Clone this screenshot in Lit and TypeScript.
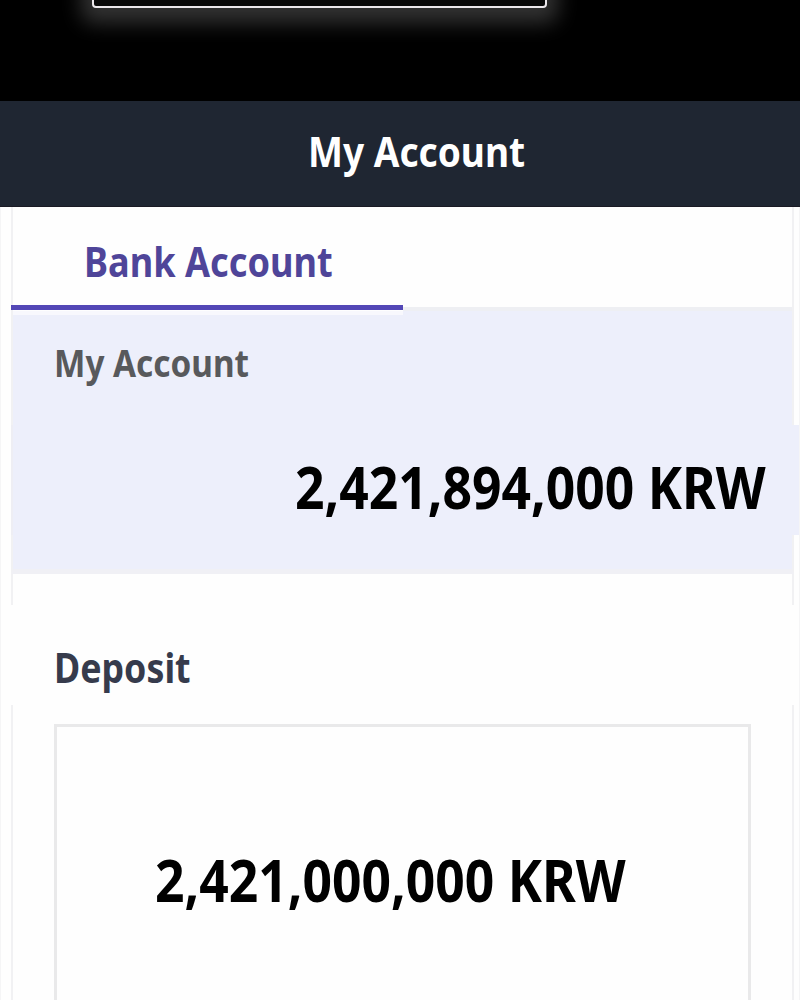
import { LitElement, TemplateResult, css, html } from 'lit';
import { customElement, property } from 'lit/decorators.js';

@customElement('app-root')
export class AccountPageElement extends LitElement {
  @property()
  balance = '2,421,894,000';

  @property()
  deposit = '2,421,000,000';

  @property()
  currency = 'KRW';

  static override styles = css`
    :host {
      display: flex;
      flex-direction: column;
      width: 800px;
      height: 1000px;
      overflow: hidden;
      box-sizing: border-box;
      background: #fefefe;
      font-family: 'Noto Sans', sans-serif;
      font-weight: 700;
      white-space: nowrap;
    }

    * {
      box-sizing: border-box;
    }

    .top {
      flex: none;
      height: 101px;
      overflow: hidden;
      background: #000;
    }

    .top-box {
      width: 455px;
      height: 108px;
      margin: -100px 0 0 92px;
      border: 2px solid #ece8ec;
      border-radius: 4px;
      background: #090909;
      box-shadow: 0 4px 20px 11px #323232;
    }

    .header {
      flex: none;
      height: 106px;
      padding-left: 308px;
      background: #1f2632;
      border-bottom: 1px solid #1a1a24;
      color: #fff;
    }

    .sheet {
      flex: 1;
      display: flex;
      flex-direction: column;
      box-shadow: inset 1px 0 #f5f5f6, inset -1px 0 #f5f5f6;
    }

    .text {
      display: block;
      width: max-content;
      margin: 0;
      font-size: 41px;
      font-weight: 700;
      transform-origin: 0 50%;
    }

    .title {
      line-height: 101px;
      transform: scaleX(0.904);
    }

    .framed {
      flex: none;
      margin: 0 6px 0 11px;
      border: solid #f1f1f3;
      border-width: 0 2px;
    }

    .tabs {
      display: flex;
      height: 104px;
    }

    .tab {
      width: 392px;
      height: 103px;
      margin-left: -2px;
      padding-left: 73px;
      border-bottom: 5px solid #5347b6;
      color: #4f4599;
    }

    .tab .text {
      line-height: 109px;
      transform: scaleX(0.882);
    }

    .tab-rest {
      flex: 1;
      border-bottom: 4px solid #eeeff3;
    }

    .panel {
      background: #edeffb;
    }

    .panel-label {
      height: 114px;
      padding-left: 41px;
      color: #58595c;
    }

    /* light strip under the active tab */
    .panel-label::before {
      content: '';
      display: block;
      width: 390px;
      height: 4px;
      margin-left: -41px;
      background: #f8f8fd;
    }

    .panel-label .text {
      font-size: 37px;
      line-height: 96px;
      transform: scaleX(0.9);
    }

    .panel-amount {
      flex: none;
      height: 110px;
      margin: 0 1px 0 11px;
      padding-left: 282px;
      border-left: 2px solid #eeeef4;
    }

    .amount {
      color: #000;
      font-size: 58.5px;
      line-height: 122px;
      transform: scaleX(0.882);
    }

    .panel-end {
      height: 39px;
      border-bottom: 5px solid #f0f0f5;
    }

    .space {
      height: 31px;
    }

    .deposit-head {
      flex: none;
      height: 100px;
      padding-left: 54px;
      color: #363b4c;
    }

    .deposit-head .text {
      line-height: 125px;
      transform: scaleX(0.872);
    }

    .deposit-body {
      flex: 1;
      display: flex;
      padding: 19px 41px 0 41px;
    }

    .deposit-box {
      flex: 1;
      padding: 91px 0 0 98px;
      border: 3px solid #e9e9ea;
      border-bottom: 0;
    }
  `;

  override render(): TemplateResult {
    return html`
      <div class="top"><div class="top-box"></div></div>
      <header class="header"><h1 class="text title">My Account</h1></header>
      <main class="sheet">
        <nav class="framed tabs">
          <div class="tab"><span class="text">Bank Account</span></div>
          <div class="tab-rest"></div>
        </nav>
        <section class="framed panel panel-label"><h2 class="text">My Account</h2></section>
        <section class="panel panel-amount">
          <span class="text amount">${this.balance} ${this.currency}</span>
        </section>
        <div class="framed panel panel-end"></div>
        <div class="framed space"></div>
        <section class="deposit-head"><h2 class="text">Deposit</h2></section>
        <section class="framed deposit-body">
          <div class="deposit-box">
            <span class="text amount">${this.deposit} ${this.currency}</span>
          </div>
        </section>
      </main>
    `;
  }
}
